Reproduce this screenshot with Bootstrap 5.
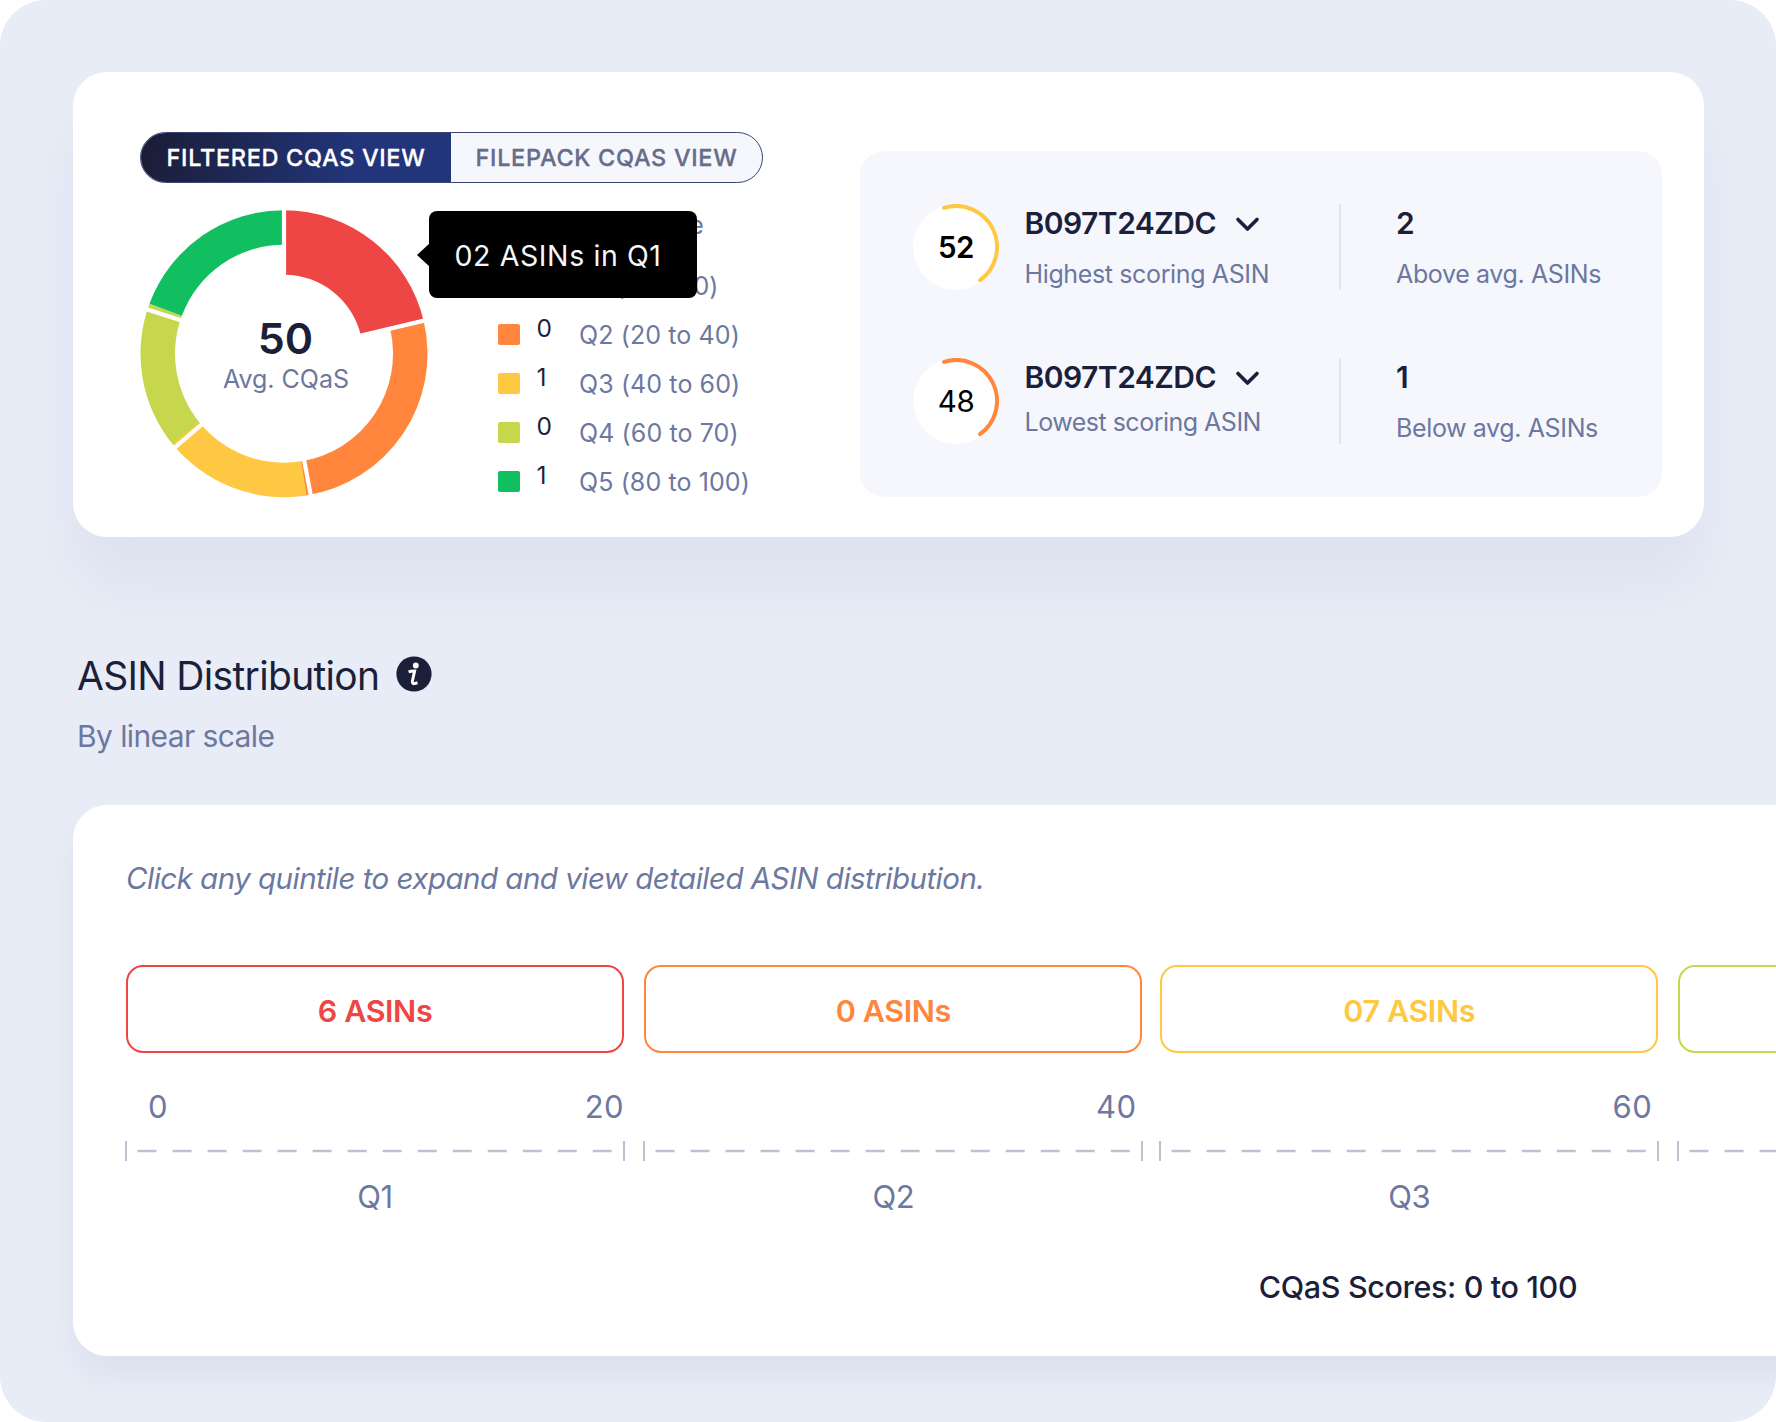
<!DOCTYPE html>
<html lang="en">
<head>
<meta charset="utf-8">
<meta name="viewport" content="width=device-width, initial-scale=1">
<title>CQaS Overview</title>
<link href="https://cdn.jsdelivr.net/npm/bootstrap@5.3.0/dist/css/bootstrap.min.css" rel="stylesheet">
<style>
  :root { --ink:#1c1f3a; --slate:#6c789f; --red:#ed4645; --orange:#ff863c; --yellow:#fec842; --lime:#c6d74b; --green:#12bf60; }
  body { font-family: Inter, "Liberation Sans", sans-serif; color: var(--ink); background:#fff; }
  .page { width:1776px; height:1422px; background:#e8ecf7; border-radius:46px; padding:72px 0 0 73px; }
  .panel { border:0; border-radius:34px; background:#fff; }
  .score-panel { width:1631px; height:464.5px; padding:59.5px 0 0 67px; box-shadow:0 50px 62px rgba(28,31,58,.045); }
  .left-col { width:719.5px; }
  .view-toggle { width:623px; height:51.5px; border-radius:26px; border:1.5px solid #3a4572; background:#f5f7fd; overflow:hidden; }
  .view-toggle .opt { border:0; border-radius:0; padding:0; line-height:50px; font-size:23.5px; font-weight:500; letter-spacing:.68px; color:#676c88; -webkit-text-stroke:.3px currentColor; }
  .view-toggle .opt.on { flex:0 0 310px; color:#fff; background:linear-gradient(100deg,#1b1e38 3%,#22357a 68%); }
  .chart-row { margin-top:27px; }
  .donut { width:288px; height:288px; }
  .donut-label { inset:0 0 0 3px; }
  .avg { font-size:43px; line-height:44px; font-weight:600; margin-top:106px; }
  .sub { font-size:25px; line-height:32px; color:var(--slate); }
  .donut-label .sub { margin-top:3px; padding-left:1px; }
  .legend { margin-left:70px; letter-spacing:.1px; }
  .legend-head { height:31px; line-height:31px; margin:0 0 20px 81px; letter-spacing:0; }
  .legend-row { height:49px; }
  .swatch { width:21.5px; height:21.5px; border-radius:2px; flex:none; }
  .qty { width:42.5px; margin-left:17px; line-height:37px; font-size:24.5px; }
  .tip { left:289px; top:.5px; width:268px; height:87px; border-radius:8px; background:#000; color:#f5f7fd; font-size:28.5px; letter-spacing:.6px; line-height:90px; padding-left:25.5px; z-index:2; }
  .tip::before { content:""; position:absolute; left:-12px; top:32px; border:12.5px solid transparent; border-left:0; border-right:13px solid #000; }
  .stats { margin-top:19.5px; width:802px; height:346px; border-radius:24px; background:#f5f7fd; padding:53px 0 0 53px; gap:68px; }
  .stats .sub { letter-spacing:-.37px; }
  .stats .cap2 { letter-spacing:-.5px; }
  .stat { height:86px; }
  .ring { width:86px; height:86px; flex:none; }
  .ring-num { inset:0 0 0 1px; line-height:87px; font-size:29.5px; letter-spacing:-.4px; color:#000; }
  .who { margin-left:26px; width:314px; }
  .name { font-size:30px; line-height:39px; font-weight:600; letter-spacing:-.52px; }
  .name svg { margin-left:18px; }
  .rule { width:2.5px; background:#e1e5f2; }
  .cnt { margin-left:55px; }
  .cap1 { margin-top:15px; } .cap2 { margin-top:8.5px; }
  .head { margin:119.5px 0 0 4px; }
  .title { font-size:39px; line-height:40px; font-weight:400; letter-spacing:-.68px; margin:0; }
  .info { margin:-4px 0 0 17px; }
  .by { font-size:30px; line-height:40px; letter-spacing:-.6px; color:var(--slate); margin-top:20px; }
  .dist { width:2690px; height:551px; margin-top:49px; padding:53px 53px 0; box-shadow:0 22px 34px rgba(28,31,58,.047); }
  .hint { font-size:29.5px; line-height:40px; letter-spacing:-.52px; font-style:italic; color:var(--slate); margin-bottom:67px; }
  .tile { width:498px; flex:none; }
  .tile:nth-child(2) { margin-left:20.4px; } .tile:nth-child(3) { margin-left:17.8px; } .tile:nth-child(4) { margin-left:20px; }
  .asins { height:88px; border:2.2px solid currentColor; border-radius:17px; font-size:30.5px; font-weight:600; letter-spacing:-.4px; padding:1px 0 0; line-height:86px; }
  .ends { height:40px; margin-top:34px; line-height:40px; font-size:31px; letter-spacing:.4px; color:var(--slate); }
  .axis { height:20px; margin-top:14px; display:block; width:500px; margin-left:-1px; }
  .qn { line-height:40px; margin-top:16px; font-size:31px; letter-spacing:-.5px; color:var(--slate); height:40px; }
  .foot { font-size:30.5px; line-height:40px; letter-spacing:-.36px; margin-top:50px; font-weight:500; }
</style>
</head>
<body>
<div class="page overflow-hidden">
  <section class="card panel score-panel flex-row">
    <div class="left-col">
      <div class="view-toggle d-flex">
        <button class="btn opt on">FILTERED CQAS VIEW</button>
        <button class="btn opt flex-fill">FILEPACK CQAS VIEW</button>
      </div>
      <div class="chart-row d-flex position-relative">
        <div class="donut position-relative">
          <svg id="donut" width="288" height="288" viewBox="-144 -143.7 288 288"></svg>
          <div class="donut-label position-absolute d-flex flex-column align-items-center">
            <div class="avg">50</div>
            <div class="sub">Avg. CQaS</div>
          </div>
        </div>
        <div class="legend">
          <div class="legend-head sub">Avg. score</div>
          <div class="legend-row d-flex align-items-center"><i class="swatch" style="background:var(--red)"></i><span class="qty align-self-start">2</span><span class="sub">Q1 (0 to 20)</span></div>
          <div class="legend-row d-flex align-items-center"><i class="swatch" style="background:var(--orange)"></i><span class="qty align-self-start">0</span><span class="sub">Q2 (20 to 40)</span></div>
          <div class="legend-row d-flex align-items-center"><i class="swatch" style="background:var(--yellow)"></i><span class="qty align-self-start">1</span><span class="sub">Q3 (40 to 60)</span></div>
          <div class="legend-row d-flex align-items-center"><i class="swatch" style="background:var(--lime)"></i><span class="qty align-self-start">0</span><span class="sub">Q4 (60 to 70)</span></div>
          <div class="legend-row d-flex align-items-center"><i class="swatch" style="background:var(--green)"></i><span class="qty align-self-start">1</span><span class="sub">Q5 (80 to 100)</span></div>
        </div>
        <div class="tip position-absolute">02 ASINs in Q1</div>
      </div>
    </div>
    <div class="stats d-flex flex-column">
      <div class="stat d-flex">
        <div class="ring position-relative">
          <svg width="86" height="86" viewBox="-43 -43 86 86"><circle r="43" fill="#fff"/><path d="M-12-39.2A41 41 0 0 1 24.1 33.2" fill="none" stroke="#fec842" stroke-width="4" stroke-linecap="round"/></svg>
          <div class="ring-num position-absolute text-center fw-semibold">52</div>
        </div>
        <div class="who">
          <div class="name d-flex align-items-center">B097T24ZDC<svg width="28" height="20" viewBox="0 0 28 20"><path d="M4 5.500 13.500 15 23 5.500" fill="none" stroke="#1c1f3a" stroke-width="3.600" stroke-linecap="round" stroke-linejoin="round"/></svg></div>
          <div class="sub cap1">Highest scoring ASIN</div>
        </div>
        <div class="rule"></div>
        <div class="cnt"><div class="name">2</div><div class="sub cap1">Above avg. ASINs</div></div>
      </div>
      <div class="stat d-flex">
        <div class="ring position-relative">
          <svg width="86" height="86" viewBox="-43 -43 86 86"><circle r="43" fill="#fff"/><path d="M-12-39.2A41 41 0 0 1 24.1 33.2" fill="none" stroke="#ff863c" stroke-width="4" stroke-linecap="round"/></svg>
          <div class="ring-num position-absolute text-center">48</div>
        </div>
        <div class="who">
          <div class="name d-flex align-items-center">B097T24ZDC<svg width="28" height="20" viewBox="0 0 28 20"><path d="M4 5.500 13.500 15 23 5.500" fill="none" stroke="#1c1f3a" stroke-width="3.600" stroke-linecap="round" stroke-linejoin="round"/></svg></div>
          <div class="sub cap2">Lowest scoring ASIN</div>
        </div>
        <div class="rule"></div>
        <div class="cnt"><div class="name">1</div><div class="sub cap1">Below avg. ASINs</div></div>
      </div>
    </div>
  </section>

  <header class="head">
    <div class="d-flex align-items-center">
      <h1 class="title">ASIN Distribution</h1>
      <svg class="info" width="36" height="36" viewBox="0 0 36 36"><circle cx="18" cy="18" r="17.600" fill="#1c1f3a"/><circle cx="19.800" cy="9.500" r="2.900" fill="#fff"/><path d="M12.600 15.900Q15.500 14.900 18.600 15.100L16.500 24.500Q15.800 28 18.400 27.600L21.500 26.800" fill="none" stroke="#fff" stroke-width="3"/></svg>
    </div>
    <div class="by">By linear scale</div>
  </header>

  <section class="card panel dist">
    <div class="hint">Click any quintile to expand and view detailed ASIN distribution.</div>
    <div class="d-flex">
      <div class="tile">
        <button class="btn asins w-100" style="color:var(--red)">6 ASINs</button>
        <div class="ends d-flex justify-content-between"><span style="margin-left:22px">0</span><span>20</span></div>
        <svg class="axis" viewBox="0 0 500 20"><path d="M1 0V20M499 0V20" stroke="#bac2d3" stroke-width="2"/><path d="M12.500 10H487" stroke="#bac2d3" stroke-width="2.500" stroke-dasharray="19 16.020"/></svg>
        <div class="qn text-center">Q1</div>
      </div>
      <div class="tile">
        <button class="btn asins w-100" style="color:var(--orange)">0 ASINs</button>
        <div class="ends text-end" style="padding-right:6px">40</div>
        <svg class="axis" viewBox="0 0 500 20"><path d="M1 0V20M499 0V20" stroke="#bac2d3" stroke-width="2"/><path d="M12.500 10H487" stroke="#bac2d3" stroke-width="2.500" stroke-dasharray="19 16.020"/></svg>
        <div class="qn text-center">Q2</div>
      </div>
      <div class="tile">
        <button class="btn asins w-100" style="color:var(--yellow)">07 ASINs</button>
        <div class="ends text-end" style="padding-right:6px">60</div>
        <svg class="axis" viewBox="0 0 500 20"><path d="M1 0V20M499 0V20" stroke="#bac2d3" stroke-width="2"/><path d="M12.500 10H487" stroke="#bac2d3" stroke-width="2.500" stroke-dasharray="19 16.020"/></svg>
        <div class="qn text-center">Q3</div>
      </div>
      <div class="tile">
        <button class="btn asins w-100" style="color:var(--lime)" aria-label="Q4"></button>
        <div class="ends"></div>
        <svg class="axis" viewBox="0 0 500 20"><path d="M1 0V20M499 0V20" stroke="#bac2d3" stroke-width="2"/><path d="M12.500 10H487" stroke="#bac2d3" stroke-width="2.500" stroke-dasharray="19 16.020"/></svg>
      </div>
    </div>
    <div class="foot text-center">CQaS Scores: 0 to 100</div>
  </section>
</div>
<script src="https://cdn.jsdelivr.net/npm/bootstrap@5.3.0/dist/js/bootstrap.bundle.min.js"></script>
<script>
  // Donut: each slice runs between two clockwise angles measured from 12 o'clock.
  const slices = [
    [0, 76.7, 79, '#ed4645'], [76.7, 171.2, 109, '#ff863c'], [170.9, 231.2, 109, '#fec842'],
    [231, 290.4, 109, '#c6d74b'], [290.4, 360, 109, '#12bf60']
  ];
  const R = 143.5, pt = (a, r) => { const t = a * Math.PI / 180; return (r * Math.sin(t)).toFixed(2) + ' ' + (-r * Math.cos(t)).toFixed(2); };
  let out = slices.map(([a, b, r, c]) =>
    `<path fill="${c}" d="M${pt(a, R)}A${R} ${R} 0 0 1 ${pt(b, R)}L${pt(b, r)}A${r} ${r} 0 0 0 ${pt(a, r)}Z"/>`).join('');
  out += [0, 76.7, 169.3, 229.3, 287.9].map(a => `<path d="M${pt(a, 76)}L${pt(a, 146)}" stroke="#fff" stroke-width="4.2"/>`).join('');
  document.getElementById('donut').innerHTML = out;
</script>
</body>
</html>
